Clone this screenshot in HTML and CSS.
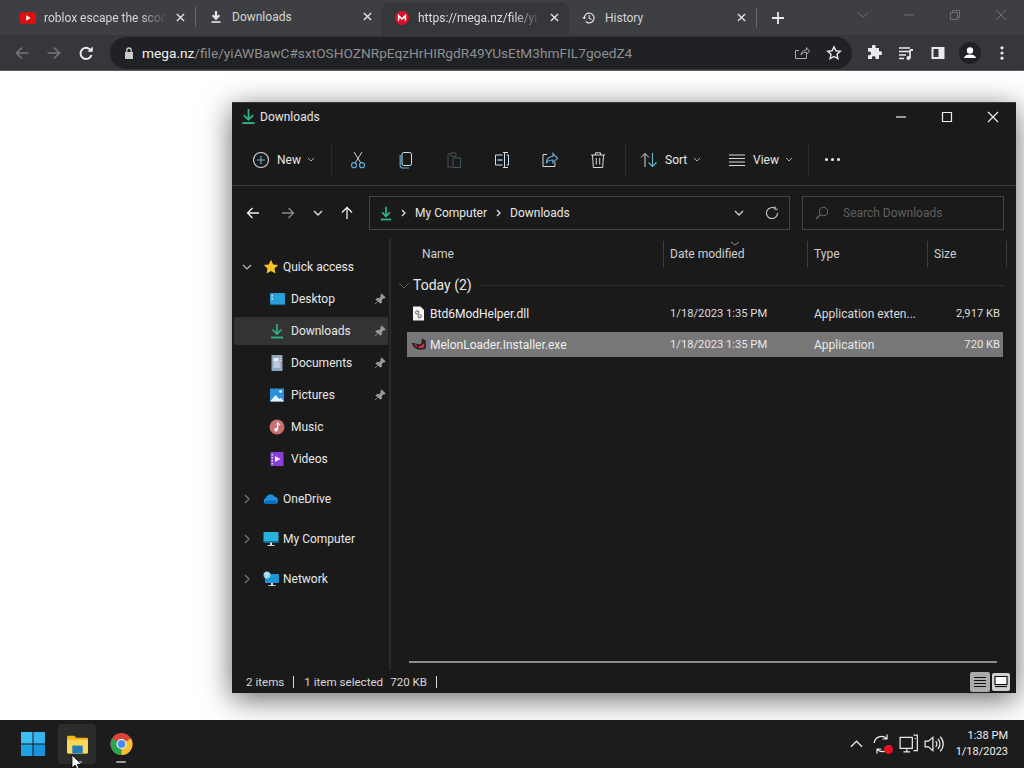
FILE: index.html
```html
<!DOCTYPE html>
<html lang="en">
<head>
<meta charset="utf-8">
<title>Downloads</title>
<link rel="stylesheet" href="styles.css">
</head>
<body>
<header class="chrome">
  <div class="tabstrip">
    <div class="tab">
      <svg class="fav" viewBox="0 0 18 14"><rect width="18" height="13" y="0.5" rx="3.5" fill="#e01010"/><path d="M7 4l5 3-5 3z" fill="#fff"/></svg>
      <span class="tab-title tab-fade">roblox escape the scoo</span>
      <svg class="tab-x" viewBox="0 0 10 10"><path d="M1 1l8 8M9 1l-8 8"/></svg>
    </div>
    <div class="tab tab-sep">
      <svg class="fav" viewBox="0 0 14 14"><path d="M7 1v7M3.6 5.2L7 8.6l3.4-3.4" fill="none" stroke="#e4e4e4" stroke-width="2.2"/><path d="M2.5 12h9" stroke="#e4e4e4" stroke-width="1.6"/></svg>
      <span class="tab-title">Downloads</span>
      <svg class="tab-x" viewBox="0 0 10 10"><path d="M1 1l8 8M9 1l-8 8"/></svg>
    </div>
    <div class="tab tab-active">
      <svg class="fav" viewBox="0 0 14 14"><circle cx="7" cy="7" r="7" fill="#d9102a"/><path d="M3.6 9.8V4.6L7 8l3.4-3.4v5.2" fill="none" stroke="#fff" stroke-width="1.5"/></svg>
      <span class="tab-title tab-fade">https://mega.nz/file/yi</span>
      <svg class="tab-x" viewBox="0 0 10 10"><path d="M1 1l8 8M9 1l-8 8"/></svg>
    </div>
    <div class="tab">
      <svg class="fav" viewBox="0 0 16 16"><path d="M2.6 8a5.6 5.6 0 1 1 1.7 4" fill="none" stroke="#e4e4e4" stroke-width="1.4"/><path d="M0.4 6.8h4.2L2.5 9.6z" fill="#e4e4e4"/><path d="M8.2 4.6v3.6l2.6 1.5" fill="none" stroke="#e4e4e4" stroke-width="1.2"/></svg>
      <span class="tab-title">History</span>
      <svg class="tab-x" viewBox="0 0 10 10"><path d="M1 1l8 8M9 1l-8 8"/></svg>
    </div>
    <div class="tab-divider"></div>
    <svg class="plus" viewBox="0 0 12 12"><path d="M6 0v12M0 6h12"/></svg>
    <div class="caption">
      <svg viewBox="0 0 12 12"><path d="M1 3.5l5 5 5-5"/></svg>
      <svg viewBox="0 0 12 12"><path d="M1 6h10"/></svg>
      <svg viewBox="0 0 12 12"><path d="M1.5 3.5h7v7h-7zM3.5 3.5v-2h7v7h-2"/></svg>
      <svg viewBox="0 0 12 12"><path d="M1 1l10 10M11 1L1 11"/></svg>
    </div>
  </div>
  <div class="toolbar">
    <svg class="tool tool-dim" viewBox="0 0 16 16"><path d="M14.5 8H2.5M8 2.5L2.5 8 8 13.5"/></svg>
    <svg class="tool tool-dim" viewBox="0 0 16 16"><path d="M1.5 8h12M8 2.5L13.5 8 8 13.5"/></svg>
    <svg class="tool" viewBox="0 0 16 16"><path d="M13.2 6A5.6 5.6 0 1 0 13.5 10" stroke-width="2"/><path class="solid" d="M14.8 1.4v5.4H9.4z"/></svg>
    <div class="omnibox">
      <svg class="lock" viewBox="0 0 10 12"><path class="lock-b" d="M1 5h8v7H1z"/><path d="M2.8 5V3.2a2.2 2.2 0 0 1 4.4 0V5" fill="none" stroke="#c9cacc" stroke-width="1.3"/></svg>
      <span class="url"><b>mega.nz</b>/file/yiAWBawC#sxtOSHOZNRpEqzHrHIRgdR49YUsEtM3hmFIL7goedZ4</span>
      <svg class="omni-ico share" viewBox="0 0 16 16"><path d="M12.5 10v3.5H1.5V5.5H5M7 10c.3-3.3 2.400-5 5.500-5V2.500l3 3.500-3 3.500V7.200C10 7.200 8.300 8 7 10z"/></svg>
      <svg class="omni-ico star" viewBox="0 0 16 16"><path d="M8 1.800l1.900 4 4.400.5-3.300 3 .9 4.400L8 11.500l-3.900 2.200.9-4.400-3.300-3 4.400-.5z"/></svg>
    </div>
    <svg class="ext" viewBox="0 0 16 16"><path d="M6 1.500a1.800 1.800 0 0 1 3.600 0V3H13v3.300h1.300a1.900 1.900 0 0 1 0 3.800H13V14H9.500v-1.300a1.800 1.800 0 0 0-3.600 0V14H2v-3.800h1.200a1.900 1.900 0 0 0 0-3.800H2V3h4z" fill="#e8eaed"/></svg>
    <svg class="ext" viewBox="0 0 16 16"><path d="M1 3h11M1 6.500h11M1 10h7M1 13.500h5" stroke="#e8eaed" stroke-width="1.400"/><path d="M12 5v8" stroke="#e8eaed" stroke-width="1.600"/><circle cx="10.500" cy="13" r="2" fill="#e8eaed"/><path d="M12 4h3v2h-3z" fill="#e8eaed"/></svg>
    <svg class="ext" viewBox="0 0 16 16"><path d="M1.500 2h13v12h-13z" fill="#e8eaed"/><path d="M3.500 4h5v8h-5z" fill="#35363a"/></svg>
    <svg class="ext avatar" viewBox="0 0 22 22"><circle cx="11" cy="11" r="11" fill="#202124"/><circle cx="11" cy="8.500" r="3.200" fill="#fff"/><path d="M4.800 16c.8-2.600 3.400-3.600 6.200-3.600s5.400 1 6.200 3.600z" fill="#fff"/></svg>
    <svg class="ext ext-last" viewBox="0 0 16 16"><circle cx="8" cy="2.800" r="1.600" fill="#e8eaed"/><circle cx="8" cy="8" r="1.600" fill="#e8eaed"/><circle cx="8" cy="13.200" r="1.600" fill="#e8eaed"/></svg>
  </div>
</header>

<main class="desktop">
  <section class="window">
    <div class="titlebar">
      <svg class="title-ico" viewBox="0 0 16 18"><path d="M8 1v11M3 7.500l5 5 5-5" fill="none" stroke="#2fb58a" stroke-width="1.800"/><path d="M1.500 16h13" stroke="#2fb58a" stroke-width="2"/></svg>
      <span class="title-text">Downloads</span>
      <div class="win-btns">
        <svg viewBox="0 0 12 12"><path d="M1 6h10"/></svg>
        <svg viewBox="0 0 12 12"><path d="M1.500 1.500h9v9h-9z"/></svg>
        <svg viewBox="0 0 12 12"><path d="M1 1l10 10M11 1L1 11"/></svg>
      </div>
    </div>

    <div class="cmdbar">
      <div class="cmd cmd-new">
        <svg class="cmd-ico" viewBox="0 0 18 18"><circle cx="9" cy="9" r="7.500" fill="none" stroke="#d8d8d8" stroke-width="1.100"/><path d="M9 5v8M5 9h8" stroke="#67b7dc" stroke-width="1.100"/></svg>
        <span>New</span>
        <svg class="chev" viewBox="0 0 8 5"><path d="M1 1l3 3 3-3"/></svg>
      </div>
      <div class="cmd-sep"></div>
      <div class="cmd-icons">
        <svg class="icon-btn" viewBox="0 0 18 18"><path d="M5 1l6.800 11M13 1L6.200 12" fill="none" stroke="#cfcfcf" stroke-width="1"/><circle cx="5" cy="14.200" r="2.500" fill="none" stroke="#5fa8d3" stroke-width="1.200"/><circle cx="13" cy="14.200" r="2.500" fill="none" stroke="#5fa8d3" stroke-width="1.200"/></svg>
        <svg class="icon-btn" viewBox="0 0 18 18"><rect x="5" y="1.500" width="9.500" height="13" rx="1.800" fill="none" stroke="#cfe0ea" stroke-width="1"/><path d="M3.200 4v10.500a2.500 2.500 0 0 0 2.500 2.500H12" fill="none" stroke="#5fa8d3" stroke-width="1.200"/></svg>
        <svg class="icon-btn" viewBox="0 0 18 18"><path d="M6.500 3H3v13h4M6 2h5v3.500H6z" fill="none" stroke="#4d4d4d" stroke-width="1"/><path d="M8 7h7.500v9.500H8z" fill="none" stroke="#3e5662" stroke-width="1"/></svg>
        <svg class="icon-btn" viewBox="0 0 18 18"><path d="M9.500 4H2.500v10h7M13.500 4h2v10h-2M10 1.500h5M10 16.500h5M11.500 1.500v15" fill="none" stroke="#cfe0ea" stroke-width="1"/><path d="M4.500 8h5v2h-5z" fill="#5fa8d3"/></svg>
        <svg class="icon-btn" viewBox="0 0 18 18"><path d="M6 3.500H2v12h12v-4" fill="none" stroke="#d8d8d8" stroke-width="1"/><path d="M5.500 11.500c.3-3.800 3-6.200 6.500-6.200V2.500l4.500 4.800-4.500 4.500V9c-2.800 0-5 .7-6.500 2.500z" fill="none" stroke="#5fa8d3" stroke-width="1.200"/></svg>
        <svg class="icon-btn" viewBox="0 0 18 18"><path d="M2 4h14M6.500 4V1.800h5V4M3.500 4l.8 12.500h9.400L14.500 4M7.300 7v6.500M10.700 7v6.500" fill="none" stroke="#d8d8d8" stroke-width="1"/></svg>
      </div>
      <div class="cmd-sep"></div>
      <div class="cmd cmd-sort">
        <svg class="cmd-ico" viewBox="0 0 18 18"><path d="M5 16V2.500M1 6.500l4-4 4 4" fill="none" stroke="#d8d8d8" stroke-width="1"/><path d="M12.500 2v13.500M8.500 11.500l4 4 4-4" fill="none" stroke="#5fb8cf" stroke-width="1.100"/></svg>
        <span>Sort</span>
        <svg class="chev" viewBox="0 0 8 5"><path d="M1 1l3 3 3-3"/></svg>
      </div>
      <div class="cmd cmd-view">
        <svg class="cmd-ico" viewBox="0 0 18 18"><path d="M1 4h16M1 7.500h16M1 11h16M1 14.500h16" stroke="#d8d8d8" stroke-width="1"/></svg>
        <span>View</span>
        <svg class="chev" viewBox="0 0 8 5"><path d="M1 1l3 3 3-3"/></svg>
      </div>
      <div class="cmd-sep"></div>
      <div class="more"><i></i><i></i><i></i></div>
    </div>

    <div class="addressbar">
      <svg class="nav-arrow bright" viewBox="0 0 14 14"><path d="M13 7H1.500M6.500 2L1.500 7l5 5"/></svg>
      <svg class="nav-arrow dim" viewBox="0 0 14 14"><path d="M1 7h11.500M7.500 2l5 5-5 5"/></svg>
      <svg class="nav-chev" viewBox="0 0 10 6"><path d="M1 1l4 4 4-4"/></svg>
      <svg class="nav-arrow bright" viewBox="0 0 14 14"><path d="M7 13V1.500M2 6.500l5-5 5 5"/></svg>
      <div class="crumbs">
        <svg class="crumb-ico" viewBox="0 0 14 18"><path d="M7 1v11M2.500 7.500L7 12.500l4.500-5" fill="none" stroke="#2fb58a" stroke-width="2"/><path d="M1 16h12" stroke="#2fb58a" stroke-width="2"/></svg>
        <svg class="crumb-sep" viewBox="0 0 5 8"><path d="M1 1l3 3-3 3"/></svg>
        <span>My Computer</span>
        <svg class="crumb-sep" viewBox="0 0 5 8"><path d="M1 1l3 3-3 3"/></svg>
        <span>Downloads</span>
        <svg class="crumb-down" viewBox="0 0 10 6"><path d="M1 1l4 4 4-4"/></svg>
        <svg class="crumb-refresh" viewBox="0 0 14 14"><path d="M12.500 7A5.500 5.500 0 1 1 10.500 2.800M10 .5v2.800h2.800" fill="none"/></svg>
      </div>
      <div class="search">
        <svg viewBox="0 0 14 14"><circle cx="8.500" cy="5.500" r="4.200" fill="none" stroke="#6b6b6b"/><path d="M5.500 8.500L1 13" stroke="#6b6b6b" stroke-width="1.200"/></svg>
        <span>Search Downloads</span>
      </div>
    </div>

    <div class="body">
      <nav class="sidebar">
        <div class="nav-row nav-root">
          <svg class="tree" viewBox="0 0 10 6"><path d="M1 1l4 4 4-4"/></svg>
          <svg class="nav-ico" viewBox="0 0 16 16"><path d="M8 .8l2.200 4.700 5 .6-3.700 3.500 1 5L8 12.100l-4.500 2.500 1-5L.8 6.100l5-.6z" fill="#f7c325"/></svg>
          <span>Quick access</span>
        </div>
        <div class="nav-row nav-sub">
          <svg class="nav-ico" viewBox="0 0 16 16"><rect x="1" y="2" width="15" height="11" rx="1" fill="#2a9fd8"/><path d="M1 13h15v1.200H1z" fill="#136a9d"/><path d="M2.500 4h1.500v1.500H2.500zM2.500 7h1.500v1.500H2.500z" fill="#d8f2ff"/></svg>
          <span>Desktop</span>
          <svg class="pin" viewBox="0 0 12 12"><path d="M7.500.8l3.700 3.700-1 .7-.8-.2-2 2 .2 2.200-1 1L1.800 6.400l1-1 2.200.2 2-2-.2-.8zM3.500 8.500L.8 11.200"/></svg>
        </div>
        <div class="nav-row nav-sub nav-current">
          <svg class="nav-ico" viewBox="0 0 14 16"><path d="M7 1v9.500M2.500 6.500l4.500 4.500 4.500-4.500" fill="none" stroke="#2fb58a" stroke-width="1.600"/><path d="M1 14.500h12" stroke="#2fb58a" stroke-width="1.800"/></svg>
          <span>Downloads</span>
          <svg class="pin" viewBox="0 0 12 12"><path d="M7.500.8l3.700 3.700-1 .7-.8-.2-2 2 .2 2.200-1 1L1.800 6.400l1-1 2.200.2 2-2-.2-.8zM3.500 8.500L.8 11.200"/></svg>
        </div>
        <div class="nav-row nav-sub">
          <svg class="nav-ico" viewBox="0 0 16 16"><path d="M2.500 0h11v16h-11z" fill="#8fa6bd"/><path d="M4.500 3h5v3.500h-5z" fill="#e8f0f6"/><path d="M4.500 8h7M4.500 10h7M4.500 12h7M10.500 3.500h1.500M10.500 5.500h1.500" stroke="#e8f0f6"/></svg>
          <span>Documents</span>
          <svg class="pin" viewBox="0 0 12 12"><path d="M7.500.8l3.700 3.700-1 .7-.8-.2-2 2 .2 2.200-1 1L1.800 6.400l1-1 2.200.2 2-2-.2-.8zM3.500 8.500L.8 11.200"/></svg>
        </div>
        <div class="nav-row nav-sub">
          <svg class="nav-ico" viewBox="0 0 16 16"><path d="M1 1.500h14v13H1z" fill="#2c8fdc"/><path d="M1 14.500L6.500 8l4 4 1.500-1.200 3 3.700z" fill="#e6f4fb"/><circle cx="11.500" cy="4.500" r="1.300" fill="#fff"/></svg>
          <span>Pictures</span>
          <svg class="pin" viewBox="0 0 12 12"><path d="M7.500.8l3.700 3.700-1 .7-.8-.2-2 2 .2 2.200-1 1L1.800 6.400l1-1 2.200.2 2-2-.2-.8zM3.500 8.500L.8 11.200"/></svg>
        </div>
        <div class="nav-row nav-sub">
          <svg class="nav-ico" viewBox="0 0 16 16"><circle cx="8" cy="8" r="7.500" fill="#c96f70"/><path d="M8.500 3.500v7" stroke="#fff" stroke-width="1.300"/><circle cx="7" cy="10.800" r="1.800" fill="#fff"/><path d="M8.500 3.500c.5 1.500 2 1.500 2.500 2.800" fill="none" stroke="#fff" stroke-width="1.100"/></svg>
          <span>Music</span>
        </div>
        <div class="nav-row nav-sub">
          <svg class="nav-ico" viewBox="0 0 16 16"><path d="M1.500 1h13v14h-13z" fill="#8a3fd8"/><path d="M6 5l5.500 3L6 11z" fill="#f3e9ff"/><path d="M2.500 3h1.500v1.500H2.500zM2.500 6h1.500v1.500H2.500zM2.500 9h1.500v1.500H2.500zM2.500 12h1.500v1.500H2.500z" fill="#e8d6ff"/></svg>
          <span>Videos</span>
        </div>
        <div class="nav-group">
          <div class="nav-row nav-tall">
            <svg class="tree tree-closed" viewBox="0 0 6 10"><path d="M1 1l4 4-4 4"/></svg>
            <svg class="nav-ico" viewBox="0 0 16 12"><path d="M3.500 11a3 3 0 0 1-.6-5.900A4.600 4.600 0 0 1 11.500 3.800 3.700 3.700 0 0 1 12.500 11z" fill="#1f8fe0"/><path d="M1.200 9.500c2-2.200 6-3 13.800-1.200-.3 1.700-1.300 2.700-2.500 2.700h-9a3 3 0 0 1-2.300-1.500z" fill="#0f6cbd"/></svg>
            <span>OneDrive</span>
          </div>
          <div class="nav-row nav-tall">
            <svg class="tree tree-closed" viewBox="0 0 6 10"><path d="M1 1l4 4-4 4"/></svg>
            <svg class="nav-ico" viewBox="0 0 16 16"><rect x="0.500" y="1" width="15" height="10.500" rx="1" fill="#29b2df"/><path d="M.5 10h15v1.500H.5z" fill="#12719a"/><path d="M7 11.500h2V14H7zM4.500 14h7v1h-7z" fill="#d7dde0"/></svg>
            <span>My Computer</span>
          </div>
          <div class="nav-row nav-tall">
            <svg class="tree tree-closed" viewBox="0 0 6 10"><path d="M1 1l4 4-4 4"/></svg>
            <svg class="nav-ico" viewBox="0 0 16 16"><rect x="2" y="3" width="14" height="9" rx="1" fill="#1e96d6"/><path d="M8 12h2v2H8zM5.500 14h7v1h-7z" fill="#d7dde0"/><circle cx="4" cy="4" r="3.500" fill="#8ed0e4"/><path d="M1.500 3c1.500-.5 2.500 1 4.500 0M3 .8c1.500 2 1.500 4.500 0 6.500" fill="none" stroke="#e8f6fb" stroke-width=".7"/></svg>
            <span>Network</span>
          </div>
        </div>
      </nav>

      <div class="content">
        <div class="list-head">
          <div class="col col-name">Name</div>
          <div class="col">Date modified</div>
          <div class="col">Type</div>
          <div class="col">Size</div>
          <svg class="sort-caret" viewBox="0 0 10 5"><path d="M1 1l4 3 4-3"/></svg>
        </div>
        <div class="group">
          <svg viewBox="0 0 12 7"><path d="M1 1l5 5 5-5"/></svg>
          <span>Today (2)</span>
          <i></i>
        </div>
        <div class="file">
          <div class="file-name">
            <svg viewBox="0 0 12 15"><path d="M.5.500h7.500l3.500 3.500v10.500h-11z" fill="#f4f4f4"/><circle cx="4.700" cy="6.500" r="1.600" fill="none" stroke="#777" stroke-width="1.100"/><circle cx="7.200" cy="10.300" r="1.600" fill="none" stroke="#777" stroke-width="1.100"/></svg>
            <span>Btd6ModHelper.dll</span>
          </div>
          <div class="file-date">1/18/2023 1:35 PM</div>
          <div class="file-type">Application exten...</div>
          <div class="file-size">2,917 KB</div>
        </div>
        <div class="file file-selected">
          <div class="file-name">
            <svg class="melon" viewBox="0 0 14 13"><path d="M.5 5c1.500 5 6 7.500 12 5.500C13.500 8 13 5 12.500 3L8 6.500z" fill="#2b2024"/><path d="M2.500 6c1.500 3 5 4.500 8.500 3.300.7-1.500.8-2.700.5-4L8 8z" fill="#d0304a"/><path d="M9.500 1l3.500 2-4 3.500z" fill="#2b2024"/><circle cx="6" cy="8" r=".8" fill="#111"/></svg>
            <span>MelonLoader.Installer.exe</span>
          </div>
          <div class="file-date">1/18/2023 1:35 PM</div>
          <div class="file-type">Application</div>
          <div class="file-size">720 KB</div>
        </div>
        <div class="scrollbar"></div>
      </div>
    </div>

    <footer class="status">
      <span>2 items</span>
      <i class="bar"></i>
      <span>1 item selected</span>
      <span class="status-size">720 KB</span>
      <i class="bar"></i>
      <div class="view-btns">
        <div class="view-btn view-on"><svg viewBox="0 0 14 12"><path d="M1 1.500h12M1 4.500h12M1 7.500h12M1 10.500h12"/></svg></div>
        <div class="view-btn"><svg viewBox="0 0 14 12"><path class="pane" d="M1 .5h12v8H1z"/><path d="M1 10.500h12"/></svg></div>
      </div>
    </footer>
  </section>
</main>

<footer class="taskbar">
  <svg class="start" viewBox="0 0 24 24"><path d="M0 0h11.500v11.500H0z" fill="#3cc0f2"/><path d="M12.500 0H24v11.500H12.500z" fill="#35b4ee"/><path d="M0 12.500h11.500V24H0z" fill="#1ea2e4"/><path d="M12.500 12.500H24V24H12.500z" fill="#1a93dc"/></svg>
  <div class="task task-on">
    <svg viewBox="0 0 22 20"><path d="M1 3a1 1 0 0 1 1-1h6l2 2h10a1 1 0 0 1 1 1v13a1 1 0 0 1-1 1H2a1 1 0 0 1-1-1z" fill="#f2b619"/><path d="M1 6h20v12a1 1 0 0 1-1 1H2a1 1 0 0 1-1-1z" fill="#fcd75a"/><path d="M6 11.500h10v7.500H6z" fill="#1f7fb8"/></svg>
    <i class="task-dot"></i>
  </div>
  <div class="task">
    <svg viewBox="0 0 24 24"><circle cx="12" cy="12" r="12" fill="#db4437"/><path d="M12 12L1.600 6A12 12 0 0 0 12 24z" fill="#2ea44f"/><path d="M12 12l10.400-6A12 12 0 0 1 12 24z" fill="#fbc02d"/><circle cx="12" cy="12" r="5.500" fill="#fff"/><circle cx="12" cy="12" r="4.300" fill="#4a8ef0"/></svg>
    <i class="task-dot"></i>
  </div>
  <div class="tray">
    <svg class="tray-ico tray-chev" viewBox="0 0 14 8"><path d="M1 7l6-6 6 6"/></svg>
    <div class="sync">
      <svg class="tray-ico" viewBox="0 0 18 18"><path d="M2 8a6.500 6.500 0 0 1 11-4M16 10a6.500 6.500 0 0 1-11 4M13.500 0.500V4.500H9.500M4.500 17.500v-4h4"/></svg>
      <i></i>
    </div>
    <svg class="tray-ico" viewBox="0 0 18 18"><path d="M1 3h11v10H1zM4 16h6M7 13v3M13 1h3.500v14H13M14.700 3.500v1"/></svg>
    <svg class="tray-ico" viewBox="0 0 18 18"><path d="M1 6.500h3l4-3.500v12l-4-3.500H1zM10.500 6.500a3.500 3.500 0 0 1 0 5M12.500 4.500a6.500 6.500 0 0 1 0 9M14.500 2.500a9 9 0 0 1 0 13"/></svg>
    <div class="clock"><div>1:38 PM</div><div>1/18/2023</div></div>
  </div>
  <svg class="cursor" viewBox="0 0 12 17"><path d="M1 1v13l3.200-3 2.200 5 2-.9-2.200-4.800H10.500z" fill="#fff" stroke="#000" stroke-width=".8"/></svg>
</footer>
</body>
</html>
```
FILE: styles.css
```css
* { box-sizing: border-box; }
html, body { margin: 0; padding: 0; }
body {
  width: 1024px;
  height: 768px;
  overflow: hidden;
  display: flex;
  flex-direction: column;
  background: #fff;
  font-family: Roboto, "Noto Sans", sans-serif;
  font-size: 12px;
}
svg { display: block; flex: none; }

/* Browser chrome */
.chrome { flex: none; height: 71px; border-bottom: 1px solid #585a5c; }
.tabstrip {
  height: 35px;
  background: #3d3f42;
  display: flex;
  align-items: center;
  padding-left: 8px;
  color: #d5d6d8;
}
.tab {
  width: 187px;
  height: 33px;
  margin-top: 2px;
  display: flex;
  align-items: center;
  padding: 0 10px 2px 12px;
  position: relative;
}
.tab-sep { border-left: 1px solid #66686a; height: 20px; margin-top: 0; padding-bottom: 0; margin-bottom: 2px; }
.tab-active { background: #36373a; border-radius: 8px 8px 0 0; color: #dcdcdc; height: 33px; }
.fav { width: 16px; height: 14px; margin-right: 8px; }
.tab-title { flex: 1; white-space: nowrap; min-width: 0; }
.tab-fade { mask-image: linear-gradient(90deg, #000 78%, transparent); -webkit-mask-image: linear-gradient(90deg, #000 78%, transparent); }
.tab-x { width: 9px; height: 9px; margin-left: 9px; fill: none; stroke: #dfe0e2; stroke-width: 1.6; }
.tab-divider { width: 1px; height: 20px; background: #66686a; }
.plus { width: 12px; height: 12px; margin-left: 15px; fill: none; stroke: #e8e8e8; stroke-width: 1.8; }
.caption { margin-left: auto; display: flex; align-items: center; gap: 34px; padding-right: 17px; margin-top: -5px; }
.caption svg { width: 12px; height: 12px; fill: none; stroke: #6e7072; stroke-width: 1; }

.toolbar {
  height: 35px;
  background: #36373a;
  display: flex;
  align-items: center;
  padding-left: 14px;
}
.tool { width: 16px; height: 16px; margin-right: 16px; fill: none; stroke: #e8eaed; stroke-width: 1.700; }
.tool-dim { stroke: #73757a; }
.tool .solid { fill: #e8eaed; stroke: none; }
.omnibox {
  width: 742px;
  height: 32px;
  flex: none;
  background: #202124;
  border-radius: 16px;
  display: flex;
  align-items: center;
  padding-left: 14px;
  margin-right: 14px;
}
.lock { width: 10px; height: 12px; margin-right: 8px; }
.lock-b { fill: #c9cacc; }
.url { flex: 1; color: #8d8f92; font-size: 13.700px; white-space: nowrap; overflow: hidden; }
.url b { font-weight: 400; color: #f0f1f2; }
.omni-ico { width: 16px; height: 16px; fill: none; stroke: #cfd0d2; stroke-width: 1; }
.share { margin-right: 16px; stroke: #a9aaad; }
.star { margin-right: 10px; stroke: #e8eaed; stroke-width: 1.400; }
.ext { width: 16px; height: 16px; margin-right: 16px; }
.avatar { width: 22px; height: 22px; margin: 0 13px 0 -3px; }
.ext-last { margin-right: 0; }

/* Desktop and window */
.desktop { flex: 1; position: relative; background: #fff; }
.window {
  position: absolute;
  left: 232px;
  top: 31px;
  width: 784px;
  height: 591px;
  background: #1a1a1a;
  color: #e8e8e8;
  border-top: 1px solid #3a3a3a;
  box-shadow: 0 6px 28px rgba(0, 0, 0, .6);
  display: flex;
  flex-direction: column;
}
.titlebar { height: 29px; flex: none; display: flex; align-items: center; padding: 0 0 2px 9px; }
.title-ico { width: 15px; height: 17px; margin-right: 4px; }
.title-text { font-size: 12px; }
.win-btns { margin-left: auto; display: flex; gap: 34px; padding-right: 17px; }
.win-btns svg { width: 12px; height: 12px; fill: none; stroke: #f0f0f0; stroke-width: 1.200; }

.cmdbar {
  height: 54px;
  flex: none;
  display: flex;
  align-items: center;
  padding: 2px 0 0 20px;
  border-bottom: 1px solid #363636;
}
.cmd { display: flex; align-items: center; }
.cmd-ico { width: 18px; height: 18px; margin-right: 7px; }
.chev { width: 8px; height: 5px; margin-left: 6px; fill: none; stroke: #a8a8a8; stroke-width: 1; }
.cmd-new { width: 79px; }
.cmd-sep { width: 1px; height: 32px; background: #2b2b2b; flex: none; }
.cmd-icons { display: flex; width: 293px; padding-left: 17px; gap: 30px; }
.icon-btn { width: 18px; height: 18px; }
.cmd-sort { width: 88px; padding-left: 14px; }
.cmd-view { width: 94px; padding-left: 14px; }
.more { display: flex; gap: 3px; margin-left: 16px; }
.more i { width: 3px; height: 3px; background: #f0f0f0; border-radius: 50%; }

.addressbar { height: 52px; flex: none; display: flex; align-items: center; padding: 2px 0 0 14px; }
.nav-arrow { width: 14px; height: 14px; fill: none; stroke-width: 1.300; }
.bright { stroke: #f0f0f0; }
.dim { stroke: #8a8a8a; margin: 0 0 0 21px; }
.nav-chev { width: 10px; height: 6px; margin: 0 17px 0 18px; fill: none; stroke: #e0e0e0; stroke-width: 1.400; }
.crumbs {
  width: 421px;
  height: 34px;
  margin-left: 15px;
  border: 1px solid #444;
  display: flex;
  align-items: center;
  padding-left: 10px;
}
.crumb-ico { width: 12px; height: 17px; margin-right: 9px; }
.crumb-sep { width: 5px; height: 8px; margin-right: 9px; fill: none; stroke: #e0e0e0; stroke-width: 1.300; }
.crumbs span { margin-right: 9px; }
.crumb-down { width: 10px; height: 6px; margin-left: auto; fill: none; stroke: #cfcfcf; stroke-width: 1.300; }
.crumb-refresh { width: 14px; height: 14px; margin: 0 10px 0 21px; stroke: #c8c8c8; stroke-width: 1.100; }
.search {
  width: 202px;
  height: 34px;
  margin-left: 12px;
  border: 1px solid #444;
  display: flex;
  align-items: center;
  padding-left: 12px;
  color: #5f5f5f;
}
.search svg { width: 14px; height: 14px; margin-right: 14px; }

.body { flex: 1; display: flex; min-height: 0; }
.sidebar { width: 159px; flex: none; padding-top: 13px; border-right: 2px solid #2a2a2a; }
.nav-row { height: 32px; display: flex; align-items: center; position: relative; }
.nav-root { padding-left: 9px; }
.nav-root .nav-ico { margin-right: 4px; }
.nav-sub { padding-left: 37px; }
.nav-current { background: #333; width: 154px; margin: 2px 0 2px 2px; height: 28px; padding-left: 35px; border-radius: 2px; }
.nav-group { padding-top: 4px; }
.nav-tall { height: 40px; padding-left: 9px; }
.tree { width: 10px; height: 6px; margin: 0 11px 0 1px; fill: none; stroke: #bdbdbd; stroke-width: 1.200; }
.tree-closed { width: 6px; height: 10px; margin: 0 13px 0 3px; stroke: #777; }
.nav-ico { width: 16px; height: 16px; margin-right: 4px; }
.nav-sub .nav-ico { margin-right: 6px; }
.pin { width: 12px; height: 12px; position: absolute; left: 142px; top: 10px; fill: #9a9a9a; stroke: #9a9a9a; stroke-width: .8; }
.nav-current .pin { left: 140px; top: 8px; }

.content { flex: 1; min-width: 0; display: flex; flex-direction: column; padding-top: 2px; }
.list-head {
  height: 28px;
  display: grid;
  grid-template-columns: 272px 144px 120px 80px;
  align-items: center;
  position: relative;
  color: #cfcfcf;
  flex: none;
}
.col { height: 26px; line-height: 26px; padding-left: 6px; border-left: 1px solid #3d3d3d; }
.col-name { padding-left: 31px; border-left: 0; }
.list-head .col:last-of-type { border-right: 1px solid #3d3d3d; }
.sort-caret { width: 10px; height: 5px; position: absolute; left: 339px; top: 1px; fill: none; stroke: #8a8a8a; }
.group { height: 28px; margin: 3px 0 -1px; display: flex; align-items: center; padding-left: 7px; flex: none; }
.group svg { width: 12px; height: 7px; margin-right: 3px; fill: none; stroke: #5a5a5a; }
.group span { font-size: 14px; margin-right: 9px; }
.group i { flex: 1; height: 1px; background: #2e2e2e; margin-right: 11px; }
.file {
  height: 25px;
  margin: 3px 0 3px 16px;
  width: 596px;
  display: grid;
  grid-template-columns: 256px 144px 120px 1fr;
  align-items: center;
  flex: none;
  color: #dcdcdc;
}
.file-date, .file-type { padding-left: 7px; white-space: nowrap; }
.file-date { font-size: 11.200px; }
.file-name { display: flex; align-items: center; padding-left: 5px; color: #efefef; }
.file-name svg { width: 13px; height: 15px; margin-right: 5px; }
.file-name .melon { width: 16px; margin: 0 3px 0 -1px; }
.file-size { text-align: right; padding-right: 3px; font-size: 11.200px; }
.file-selected { background: #777; color: #e8e8e8; }
.scrollbar { margin: auto 19px 7px 18px; height: 2px; background: #8c8c8c; flex: none; }

.status { height: 23px; flex: none; display: flex; align-items: center; padding-left: 14px; color: #d8d8d8; font-size: 11.600px; }
.bar { width: 1px; height: 12px; background: #d8d8d8; margin: 0 10px 0 9px; }
.status-size { margin-left: 7px; }
.view-btns { margin-left: auto; display: flex; gap: 2px; padding-right: 6px; }
.view-btn { width: 20px; height: 20px; display: flex; align-items: center; justify-content: center; background: #ababab; border-radius: 2px; }
.view-btn + .view-btn { width: 18px; height: 18px; background: #cfcfcf; margin-top: 1px; }
.view-btn svg { width: 14px; height: 12px; fill: none; stroke: #111; stroke-width: 1.200; }
.view-btn .pane { fill: #fff; stroke: #111; }

/* Taskbar */
.taskbar {
  flex: none;
  height: 48px;
  background: #1c1c1c;
  display: flex;
  align-items: center;
  padding-left: 21px;
  position: relative;
  color: #f0f0f0;
}
.start { width: 24px; height: 24px; margin-right: 13px; }
.task { width: 38px; height: 40px; display: flex; align-items: center; justify-content: center; position: relative; margin-right: 6px; border-radius: 4px; }
.task-on { background: #2c2c2c; }
.task svg { width: 23px; height: 22px; }
.task-dot { position: absolute; left: 14px; bottom: 1px; width: 10px; height: 2px; background: #9a9a9a; border-radius: 1px; }
.tray { margin-left: auto; display: flex; align-items: center; padding-right: 16px; }
.tray-ico { width: 20px; height: 20px; fill: none; stroke: #ececec; stroke-width: 1.100; }
.tray-chev { width: 13px; height: 8px; margin-right: 9px; stroke-width: 1.300; }
.sync { position: relative; margin-right: 7px; }
.sync i { position: absolute; right: -1px; bottom: 0; width: 9px; height: 9px; border-radius: 50%; background: #e81123; }
.tray .tray-ico + .tray-ico { margin-left: 5px; }
.clock { margin-left: 12px; text-align: right; line-height: 16px; font-size: 11px; }
.cursor { position: absolute; left: 71px; top: 34px; width: 12px; height: 17px; }
```
